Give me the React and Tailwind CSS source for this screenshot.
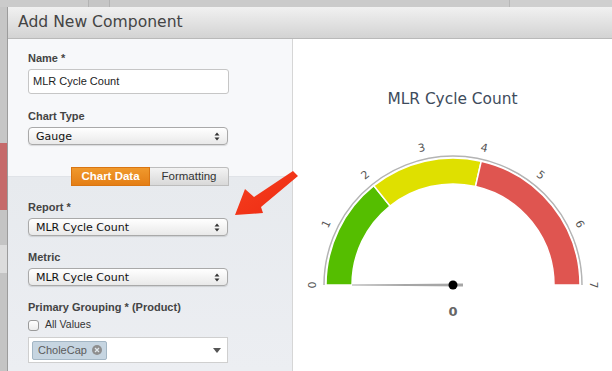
import React from 'react'

const SANS = { fontFamily: '"Liberation Sans", Arial, sans-serif' }
const LUCIDA = { fontFamily: '"DejaVu Sans", "Liberation Sans", sans-serif' }

function UpDown() {
  return (
    <svg width="6" height="9" viewBox="0 0 6 9" className="shrink-0">
      <path d="M3 0.5 L5.5 3.5 L0.5 3.5 Z" fill="#333" />
      <path d="M3 8.5 L5.5 5.5 L0.5 5.5 Z" fill="#333" />
    </svg>
  )
}

function Select({ value }) {
  return (
    <div
      className="h-[18px] w-[200px] rounded-[4px] border border-[#a9a9a9] bg-gradient-to-b from-white to-[#e9e9e9] shadow-[0_1px_1px_rgba(0,0,0,0.12)] flex items-center justify-between pl-[7px] pr-[7px] text-[11px] text-[#111] leading-none"
      style={LUCIDA}
    >
      <span>{value}</span>
      <UpDown />
    </div>
  )
}

function Label({ children }) {
  return (
    <div className="text-[11px] leading-[14px] font-bold text-[#444]" style={SANS}>
      {children}
    </div>
  )
}

const CX = 160
const CY = 176
const MAX = 7

function pt(v, r) {
  const a = (v / MAX) * Math.PI
  return [CX - r * Math.cos(a), CY - r * Math.sin(a)]
}

function band(from, to, r1, r2) {
  const [x1, y1] = pt(from, r2)
  const [x2, y2] = pt(to, r2)
  const [x3, y3] = pt(to, r1)
  const [x4, y4] = pt(from, r1)
  return `M${x1} ${y1} A${r2} ${r2} 0 0 1 ${x2} ${y2} L${x3} ${y3} A${r1} ${r1} 0 0 0 ${x4} ${y4} Z`
}

function Gauge() {
  const [ox1, oy1] = pt(0, 129)
  const [ox2, oy2] = pt(7, 129)
  return (
    <svg width="319" height="262" viewBox="0 0 319 262">
      <path d={`M${ox1} ${oy1} A129 129 0 0 1 ${ox2} ${oy2}`} fill="none" stroke="#b4b4b4" strokeWidth="1.5" />
      <path d={band(0, 2, 101, 127)} fill="#55be00" stroke="#fff" strokeWidth="1.5" />
      <path d={band(2, 4, 101, 127)} fill="#dfe000" stroke="#fff" strokeWidth="1.5" />
      <path d={band(4, 7, 101, 127)} fill="#df5550" stroke="#fff" strokeWidth="1.5" />
      {[0, 1, 2, 3, 4, 5, 6, 7].map(v => {
        const [x, y] = pt(v, 140)
        const rot = (v / MAX) * 180 - 90
        return (
          <text
            key={v}
            x={x}
            y={y}
            transform={`rotate(${rot} ${x} ${y})`}
            textAnchor="middle"
            dominantBaseline="middle"
            fontSize="11"
            fill="#555"
            style={LUCIDA}
          >
            {v}
          </text>
        )
      })}
      <polygon
        points={`${CX + 10},${CY - 1.5} ${CX - 101},${CY - 0.5} ${CX - 101},${CY + 0.5} ${CX + 10},${CY + 1.5}`}
        fill="#a6a6a6"
      />
      <circle cx={CX} cy={CY} r="4.5" fill="#000" />
      <text x={CX} y={203} textAnchor="middle" dominantBaseline="middle" fontSize="13" fontWeight="bold" fill="#666" style={LUCIDA}>
        0
      </text>
    </svg>
  )
}

export default function App() {
  return (
    <div className="relative w-[612px] h-[371px] overflow-hidden bg-[#c8c8c8] flex flex-col">
      {/* background page peeking through */}
      <div className="h-[7px] flex shrink-0 bg-[#cbcbcb]">
        <div className="w-[89px] border-r border-[#b3b3b3]" />
        <div className="w-[21px] border-r border-[#b3b3b3] bg-[#c6c6c6]" />
        <div className="w-[400px] border-r border-[#b8b8b8]" />
        <div className="flex-1 bg-[#cfcfcf]" />
      </div>
      <div className="flex flex-1 min-h-0">
        <div className="w-[7px] flex flex-col shrink-0">
          <div className="h-[136px] bg-[#c6c6c6]" />
          <div className="h-[67px] bg-[#c56a6a]" />
          <div className="h-[35px] bg-[#c4c4c4]" />
          <div className="h-[28px] bg-[#dcdcdc]" />
          <div className="flex-1 bg-[#c4c4c4]" />
        </div>

        {/* modal */}
        <div className="flex-1 flex flex-col border-l border-[#9c9c9c] bg-white">
          <div className="h-[32px] shrink-0 border-b border-[#b9b9b9] bg-gradient-to-b from-[#f1f1f1] to-[#d3d3d3] flex items-center pl-[10px]">
            <span className="text-[15.6px] text-[#444] leading-none pt-[1px]" style={LUCIDA}>
              Add New Component
            </span>
          </div>

          <div className="flex flex-1 min-h-0">
            <div className="w-[285px] shrink-0 border-r border-[#d6d6d6] px-[20px] pt-[12px] bg-[linear-gradient(to_bottom,#f7f8fa_0,#f7f8fa_137px,#d9dce1_137px,#e7eaee_138px,#eceef2_100%)]">
              <Label>Name *</Label>
              <div
                className="mt-[4px] h-[25px] w-[201px] rounded-[3px] border border-[#c6c6c6] bg-white flex items-center pl-[4px] text-[11px] text-[#222]"
                style={SANS}
              >
                MLR Cycle Count
              </div>

              <div className="mt-[15px]">
                <Label>Chart Type</Label>
              </div>
              <div className="mt-[4px]">
                <Select value="Gauge" />
              </div>

              <div className="mt-[22px] h-[19px] w-[201px] flex justify-end" style={SANS}>
                <div className="w-[79px] h-full flex items-center justify-center bg-gradient-to-b from-[#f0992c] to-[#e47e14] border border-[#d97512] text-white font-bold text-[11.5px]">
                  Chart Data
                </div>
                <div className="w-[79px] h-full flex items-center justify-center bg-gradient-to-b from-[#f3f3f3] to-[#d9d9d9] border border-l-0 border-[#bdbdbd] rounded-tr-[3px] text-[#333] text-[11.5px]">
                  Formatting
                </div>
              </div>

              <div className="mt-[14px]">
                <Label>Report *</Label>
              </div>
              <div className="mt-[4px]">
                <Select value="MLR Cycle Count" />
              </div>

              <div className="mt-[14px]">
                <Label>Metric</Label>
              </div>
              <div className="mt-[4px]">
                <Select value="MLR Cycle Count" />
              </div>

              <div className="mt-[14px]">
                <Label>Primary Grouping * (Product)</Label>
              </div>
              <div className="mt-[5px] flex items-center gap-[6px] h-[12px]" style={SANS}>
                <div className="w-[11px] h-[11px] rounded-[3px] border border-[#9a9a9a] bg-gradient-to-b from-white to-[#ececec]" />
                <span className="text-[10.5px] text-[#333]">All Values</span>
              </div>
              <div
                className="mt-[6px] h-[26px] w-[200px] border border-[#cfcfcf] bg-white flex items-center justify-between pl-[3px] pr-[6px]"
                style={SANS}
              >
                <div className="h-[19px] flex items-center gap-[5px] pl-[5px] pr-[4px] rounded-[2px] border border-[#a3b6c4] bg-[#c6d5e1] text-[11px] text-[#5b5b5b]">
                  CholeCap
                  <span className="w-[10px] h-[10px] rounded-full bg-[#8e8e8e] flex items-center justify-center">
                    <svg width="6" height="6" viewBox="0 0 6 6">
                      <path d="M1 1 L5 5 M5 1 L1 5" stroke="#dfe6eb" strokeWidth="1.3" />
                    </svg>
                  </span>
                </div>
                <svg width="8" height="5" viewBox="0 0 8 5">
                  <path d="M0 0 L8 0 L4 5 Z" fill="#555" />
                </svg>
              </div>
            </div>

            <div className="flex-1 flex flex-col items-center pt-[50px]">
              <div className="text-[15.4px] leading-[20px] text-[#3e4b5c]" style={LUCIDA}>
                MLR Cycle Count
              </div>
              <Gauge />
            </div>
          </div>
        </div>
      </div>

      {/* red callout arrow */}
      <svg className="absolute left-0 top-0 pointer-events-none" width="612" height="371" viewBox="0 0 612 371">
        <defs>
          <linearGradient id="arr" x1="0" y1="0" x2="1" y2="1">
            <stop offset="0" stopColor="#f5401f" />
            <stop offset="1" stopColor="#ee2a12" />
          </linearGradient>
        </defs>
        <polygon
          points="235,215 245,189 254,197 293,171 298,176 261,207 263,213"
          fill="url(#arr)"
        />
      </svg>
    </div>
  )
}
